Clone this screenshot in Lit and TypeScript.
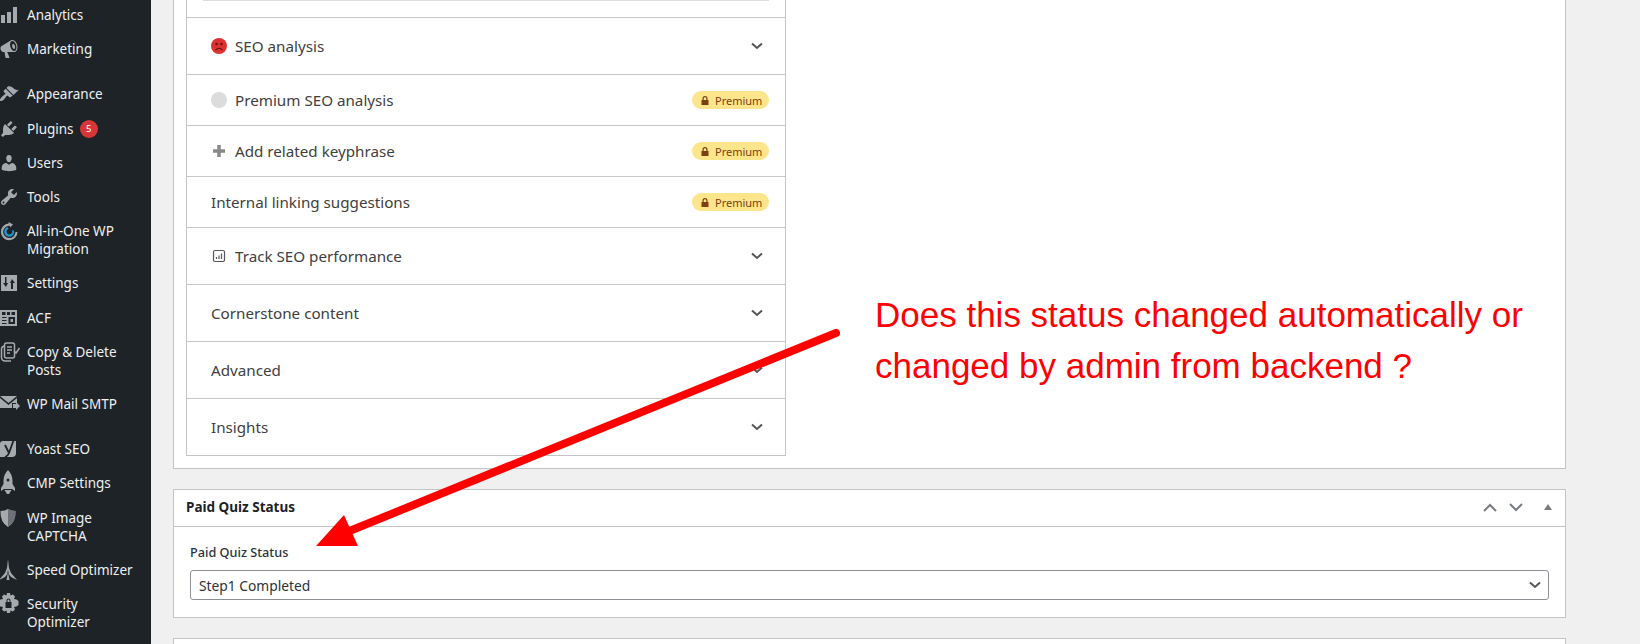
import { LitElement, html, css, svg } from "lit";
import { customElement } from "lit/decorators.js";

const ic: Record<string, any> = {
  analytics: svg`<path d="M18 18V2h-4v16h4zm-6 0V7H8v11h4zm-6 0v-8H2v8h4z"/>`,
  marketing: svg`<path fill-rule="evenodd" d="M18.15 5.94c.46 1.62.38 3.22-.02 4.48-.42 1.28-1.26 2.18-2.3 2.48-.16.06-.26.06-.4.06-.06.02-.12.02-.18.02-.06.02-.14.02-.22.02h-6.8l2.22 5.5c.02.14-.06.26-.14.34-.08.1-.24.16-.34.16H6.95c-.1 0-.26-.06-.34-.16-.08-.08-.16-.2-.14-.34l-1-5.5H4.25l-.02-.02c-.5.06-1.08-.18-1.54-.62s-.88-1.08-1.06-1.88c-.24-.8-.2-1.56-.02-2.2.18-.62.58-1.08 1.06-1.3l.02-.02 9-5.4c.1-.06.18-.1.24-.16.06-.04.14-.08.24-.12.16-.08.28-.12.5-.18 1.04-.3 2.24.1 3.22.98s1.84 2.24 2.26 3.86zm-2.58 5.98c.4-.1.74-.34 1.04-.7.58-.7.86-1.76.86-3.04 0-.64-.1-1.3-.28-1.98-.34-1.36-1.02-2.5-1.78-3.24s-1.68-1.1-2.46-.88c-.82.22-1.4.96-1.7 2-.32 1.04-.28 2.36.06 3.72.38 1.36 1 2.5 1.8 3.24.78.74 1.62 1.1 2.46.88z"/><ellipse cx="14.600" cy="7.500" rx="1.400" ry="2.500" transform="rotate(-14 14.600 7.500)"/>`,
  appearance: svg`<path d="M14.48 11.06L7.41 3.99l1.5-1.5c.5-.56 2.3-.47 3.51.32 1.21.8 1.43 1.28 2.91 2.1 1.18.64 2.45 1.26 4.45.85zm-.71.71L6.7 4.7 4.93 6.47c-.39.39-.39 1.02 0 1.41l1.06 1.06c.39.39.39 1.03 0 1.42-.6.6-1.43 1.11-2.21 1.69-.35.26-.7.53-1.01.84-1.43 1.43-2.4 3.04-1.53 3.9.87.87 2.48-.1 3.91-1.53.31-.31.58-.66.84-1.01.58-.78 1.09-1.61 1.69-2.21.39-.39 1.03-.39 1.42 0l1.06 1.06c.39.39 1.02.39 1.41 0z"/>`,
  plugins: svg`<path d="M13.11 4.36L9.87 7.6 8 5.73l3.24-3.24c.35-.34 1.05-.2 1.56.32.52.51.66 1.21.31 1.55zm-8 1.77l.91-1.12 9.01 9.01-1.19.84c-.71.71-2.63 1.16-3.82 1.16H6.14L4.9 17.26c-.59.59-1.54.59-2.12 0-.59-.58-.59-1.53 0-2.12l1.24-1.24v-3.88c0-1.13.4-3.19 1.09-3.89zm7.26 3.97l3.24-3.24c.34-.35 1.04-.21 1.55.31.52.51.66 1.21.31 1.55l-3.24 3.25z"/>`,
  users: svg`<path d="M10 9.25c-2.27 0-2.73-3.44-2.73-3.44C7 4.02 7.82 2 9.97 2c2.16 0 2.98 2.02 2.71 3.81 0 0-.41 3.44-2.68 3.44zm0 2.57L12.72 10c2.39 0 4.52 2.33 4.52 4.53v2.49s-3.65 1.13-7.24 1.13c-3.65 0-7.24-1.13-7.24-1.13v-2.49c0-2.25 1.94-4.48 4.47-4.48z"/>`,
  tools: svg`<path fill-rule="evenodd" d="M16.68 9.77c-1.34 1.34-3.3 1.67-4.95.99l-5.41 6.52c-.99.99-2.59.99-3.58 0s-.99-2.59 0-3.57l6.52-5.42c-.68-1.65-.35-3.61.99-4.95 1.28-1.28 3.12-1.62 4.72-1.06l-2.89 2.89 2.82 2.82 2.86-2.87c.53 1.58.18 3.39-1.08 4.67zM3.81 16.21c.4.39 1.04.39 1.43 0 .4-.4.4-1.04 0-1.43-.39-.4-1.03-.4-1.43 0-.39.39-.39 1.03 0 1.43z"/>`,
  migration: svg`<path d="M9.500 1 L14 3.500 L11 6.500 L10.800 4.700 A6.200 6.200 0 1 0 16.500 11 L18.500 11 A8.300 8.300 0 1 1 9.700 2.600 Z"/><path d="M15 9.500 A5 5 0 1 1 8.500 6 L9.500 8 A2.800 2.800 0 1 0 13 9.500 Z" fill="#1d9ad6"/>`,
  settings: svg`<path fill-rule="evenodd" d="M2 2 H18 V18 H2 Z M6 4 V10 H4 L7 14 L9 10 H7.500 V4 Z M12 16 H14 V10 H16 L13 6 L11 10 H12 Z"/>`,
  acf: svg`<path fill-rule="evenodd" d="M1 2 H18 V18 H1 Z M3 4 V7 H6.500 V4 Z M8 4 V7 H11 V4 Z M12.500 4 V7 H16 V4 Z M3 9 V10 H7.500 V9 Z M9.500 9 V16 H16 V9 Z M3 12 V13 H7.500 V12 Z M3 15 V16 H7.500 V15 Z M11.500 11 H14 V14 H11.500 Z"/>`,
  copy: svg`<g fill="none" stroke="currentColor" stroke-width="1.500"><path d="M5 4 Q2 5 2.500 8 V16 Q3 19 6 19 H12"/><rect x="5.500" y="1" width="10" height="15" rx="2"/><path d="M8 5 H13 M8 8 H13 M8 11 H11 M15 9 L17 11 L20.500 6"/></g>`,
  mail: svg`<path d="M1 2 H18 L9.500 9 Z"/><path d="M1 4 L9.500 11 L18 4 V9 H13 V14 H1 Z"/><path d="M14 10 H17 V8 L21 12 L17 16 V14 H14 Z"/>`,
  yoast: svg`<path d="M4 2 H17 V14 Q17 18 13 18 H1 V5 Q1 2 4 2 Z"/><path d="M6 6 L10 14 M15 0 L10 14 Q9 17 6 18" fill="none" stroke="#1d2327" stroke-width="1.800"/>`,
  cmp: svg`<path d="M9 -3 Q13 1 13.500 7 V11 L16 15 V18 L13 16 H5 L2 18 V15 L4.500 11 V7 Q5 1 9 -3 Z"/><path d="M5.500 17 H12.500 L10 21 H8 Z"/><circle cx="9" cy="7" r="1.500" fill="#1d2327"/>`,
  shield: svg`<path d="M1.500 3 Q6 3 9 1 Q12 3 16.500 3 Q17 14 9 19 Q1 14 1.500 3 Z"/><path d="M9 1 Q12 3 16.500 3 Q17 14 9 19 Z" fill="#6d7175"/>`,
  speed: svg`<path d="M9 -1 L10 8 L12 13 L18 20 L12 17 L10 14.500 L9 10 L8 14.500 L6 17 L0 20 L6 13 L8 8 Z"/><path d="M9 12 L10.500 20 H7.500 Z"/>`,
  security: svg`<path fill-rule="evenodd" d="M8 -1 H11 L11.500 1.500 L14 .500 L16 2.500 L15 5 L17.500 5.500 L19.500 7 V11 L17.500 12.500 L15 13 L16 15.500 L14 17.500 L11.500 16.500 L11 19 H8 L7.500 16.500 L5 17.500 L3 15.500 L4 13 L1.500 12.500 L-.500 11 V7 L1.500 5.500 L4 5 L3 2.500 L5 .500 L7.500 1.500 Z M6.500 8 V14 H12.500 V8 H11.500 V6.500 A2 2 0 0 0 7.500 6.500 V8 Z M8.500 8 V6.500 A1 1 0 0 1 10.500 6.500 V8 Z"/>`,
};

type Item = { t: string; i: string; sep?: boolean; badge?: string };
const menu: Item[] = [
  { t: "Analytics", i: "analytics" },
  { t: "Marketing", i: "marketing" },
  { t: "Appearance", i: "appearance", sep: true },
  { t: "Plugins", i: "plugins", badge: "5" },
  { t: "Users", i: "users" },
  { t: "Tools", i: "tools" },
  { t: "All-in-One WP Migration", i: "migration" },
  { t: "Settings", i: "settings" },
  { t: "ACF", i: "acf" },
  { t: "Copy & Delete Posts", i: "copy" },
  { t: "WP Mail SMTP", i: "mail" },
  { t: "Yoast SEO", i: "yoast", sep: true },
  { t: "CMP Settings", i: "cmp" },
  { t: "WP Image CAPTCHA", i: "shield" },
  { t: "Speed Optimizer", i: "speed" },
  { t: "Security Optimizer", i: "security" },
];

const chevron = html`<svg class="chev" viewBox="0 0 12 8" width="12" height="8"><path d="M1 1.500 L6 6 L11 1.500" fill="none" stroke="#555" stroke-width="2"/></svg>`;
const lock = html`<svg viewBox="0 0 8 9" width="8" height="9"><path fill="#7c3f10" d="M1 4 H1.500 V2.500 A2.500 2.500 0 0 1 6.500 2.500 V4 H7.500 V9 H.500 V4 Z M2.700 4 H5.300 V2.500 A1.300 1.300 0 0 0 2.700 2.500 Z" fill-rule="evenodd"/></svg>`;
const premium = html`<span class="premium">${lock}<span>Premium</span></span>`;

const sad = html`<svg class="lead" viewBox="0 0 16 16" width="16" height="16"><circle cx="8" cy="8" r="8" fill="#dc3232"/><circle cx="5.500" cy="6" r="1.200" fill="#6b1010"/><circle cx="10.500" cy="6" r="1.200" fill="#6b1010"/><path d="M4.500 12 Q8 8.500 11.500 12" fill="none" stroke="#6b1010" stroke-width="1.100"/></svg>`;
const grey = html`<svg class="lead" viewBox="0 0 16 16" width="16" height="16"><circle cx="8" cy="8" r="8" fill="#dcdcdc"/></svg>`;
const plus = html`<svg class="lead" viewBox="0 0 16 16" width="16" height="16"><path d="M8 2 V14 M2 8 H14" stroke="#888" stroke-width="3.500" fill="none"/></svg>`;
const chart = html`<svg class="lead" viewBox="0 0 16 16" width="16" height="16"><rect x="2.500" y="2.500" width="11" height="11" rx="1.500" fill="none" stroke="#555" stroke-width="1.200"/><path d="M5.500 11 V9 M8 11 V7.500 M10.500 11 V5.500" stroke="#555" stroke-width="1.200"/></svg>`;

type Row = { t: string; lead?: any; end?: any; tall: boolean };
const rows: Row[] = [
  { t: "SEO analysis", lead: sad, end: chevron, tall: true },
  { t: "Premium SEO analysis", lead: grey, end: premium, tall: false },
  { t: "Add related keyphrase", lead: plus, end: premium, tall: false },
  { t: "Internal linking suggestions", end: premium, tall: false },
  { t: "Track SEO performance", lead: chart, end: chevron, tall: true },
  { t: "Cornerstone content", end: chevron, tall: true },
  { t: "Advanced", end: chevron, tall: true },
  { t: "Insights", end: chevron, tall: true },
];

@customElement("app-root")
export class AppRoot extends LitElement {
  static styles = css`
    :host {
      display: flex;
      position: relative;
      width: 1640px;
      height: 644px;
      overflow: hidden;
      background: #f0f0f1;
      font-family: "Noto Sans", "Open Sans", sans-serif;
    }
    .side {
      width: 151px;
      flex: none;
      background: #1d2327;
      color: #f0f0f1;
      height: 644px;
      overflow: hidden;
      box-sizing: border-box;
    }
    .menu { margin-top: -2px; }
    .item {
      display: flex;
      gap: 8px;
      padding: 8.1px 0;
      font-size: 13.5px;
      line-height: 18px;
      align-items: flex-start;
    }
    .item.sep { margin-top: 11px; }
    .item svg {
      width: 20px;
      height: 20px;
      flex: none;
      fill: #a7aaad;
      color: #a7aaad;
      margin: -1px 0 -1px -1px;
      overflow: visible;
    }
    .item .label { width: 110px; }
    .badge {
      display: inline-block;
      width: 18px;
      height: 18px;
      border-radius: 50%;
      background: #d63638;
      color: #fff;
      font-size: 9.5px;
      line-height: 18px;
      text-align: center;
      margin-left: 6px;
      vertical-align: top;
    }
    .main { flex: none; width: 1393px; margin-left: 22px; }
    .card {
      background: #fff;
      border: 1px solid #c3c4c7;
      box-sizing: border-box;
    }
    .first {
      border-top: 0;
      height: 469px;
      padding: 0 12px;
    }
    .box {
      width: 600px;
      height: 456px;
      box-sizing: border-box;
      border: 1px solid #c3c4c7;
      border-top: 0;
    }
    .topstrip { height: 17px; padding: 0 16px; box-sizing: border-box; }
    .topstrip div { height: 1px; background: #ddd; }
    .row {
      display: flex;
      align-items: center;
      border-top: 1px solid #c8c8c8;
      padding: 0 16px 0 24px;
      box-sizing: border-box;
      font-size: 15.2px;
      color: #404040;
      height: 51px;
    }
    .row.tall { height: 57px; }
    .row .lead { margin-right: 8px; flex: none; }
    .row .name { flex: 1; }
    .premium {
      display: flex;
      align-items: center;
      gap: 6px;
      width: 77px;
      height: 18px;
      box-sizing: border-box;
      padding-left: 9px;
      border-radius: 9px;
      background: #fde58b;
      color: #7c3f10;
      font-size: 11px;
    }
    .chev { margin-right: 6px; }
    .quiz { margin-top: 20px; height: 129px; }
    .head {
      display: flex;
      align-items: center;
      height: 37px;
      padding: 0 12px 2px;
      box-sizing: border-box;
      border-bottom: 1px solid #c3c4c7;
      font-size: 13.5px;
      font-weight: 700;
      color: #1d2327;
    }
    .head .name { flex: 1; }
    .acts { display: flex; align-items: center; gap: 12px; margin-right: 1.5px; }
    .tri { margin-left: 8.5px; }
    .body { padding: 16px 16px 0; }
    .lab { font-size: 12.7px; font-weight: 500; color: #2c3338; line-height: 18px; }
    .select {
      display: flex;
      align-items: center;
      justify-content: space-between;
      margin-top: 9px;
      height: 30px;
      box-sizing: border-box;
      border: 1px solid #8c8f94;
      border-radius: 3px;
      padding: 0 7px 0 8px;
      font-size: 13.8px;
      color: #2c3338;
    }
    .select .chev { margin: 0; }
    .third { margin-top: 20px; height: 40px; }
    .over { position: absolute; left: 0; top: 0; pointer-events: none; }
    .note {
      position: absolute;
      left: 875px;
      top: 289px;
      font-family: "Liberation Sans", Arial, sans-serif;
      font-size: 35px;
      line-height: 51px;
      color: #ff0000;
      white-space: nowrap;
    }
  `;

  render() {
    return html`
      <nav class="side"><div class="menu">
        ${menu.map(
          (m) => html`<div class="item ${m.sep ? "sep" : ""}">
            <svg viewBox="0 0 20 20">${ic[m.i]}</svg>
            <span class="label">${m.t}${m.badge ? html`<span class="badge">${m.badge}</span>` : ""}</span>
          </div>`
        )}
      </div></nav>
      <main class="main">
        <section class="card first">
          <div class="box">
            <div class="topstrip"><div></div></div>
            ${rows.map(
              (r) => html`<div class="row ${r.tall ? "tall" : ""}">
                ${r.lead ?? ""}<span class="name">${r.t}</span>${r.end}
              </div>`
            )}
          </div>
        </section>
        <section class="card quiz">
          <div class="head">
            <span class="name">Paid Quiz Status</span>
            <span class="acts">
              <svg viewBox="0 0 14 9" width="14" height="9"><path d="M1 8 L7 2 L13 8" fill="none" stroke="#787c82" stroke-width="2"/></svg>
              <svg viewBox="0 0 14 9" width="14" height="9"><path d="M1 1 L7 7 L13 1" fill="none" stroke="#787c82" stroke-width="2"/></svg>
              <svg class="tri" viewBox="0 0 8 6" width="8" height="6"><path d="M4 0 L8 6 H0 Z" fill="#787c82"/></svg>
            </span>
          </div>
          <div class="body">
            <div class="lab">Paid Quiz Status</div>
            <div class="select"><span>Step1 Completed</span>${chevron}</div>
          </div>
        </section>
        <section class="card third"></section>
      </main>
      <svg class="over" width="1640" height="644" viewBox="0 0 1640 644">
        <line x1="836" y1="333" x2="352" y2="530" stroke="#ff0000" stroke-width="8" stroke-linecap="round"/>
        <path d="M316 546 L344 515 L358 546 Z" fill="#ff0000"/>
      </svg>
      <div class="note">Does this status changed automatically or<br />changed by admin from backend ?</div>
    `;
  }
}
